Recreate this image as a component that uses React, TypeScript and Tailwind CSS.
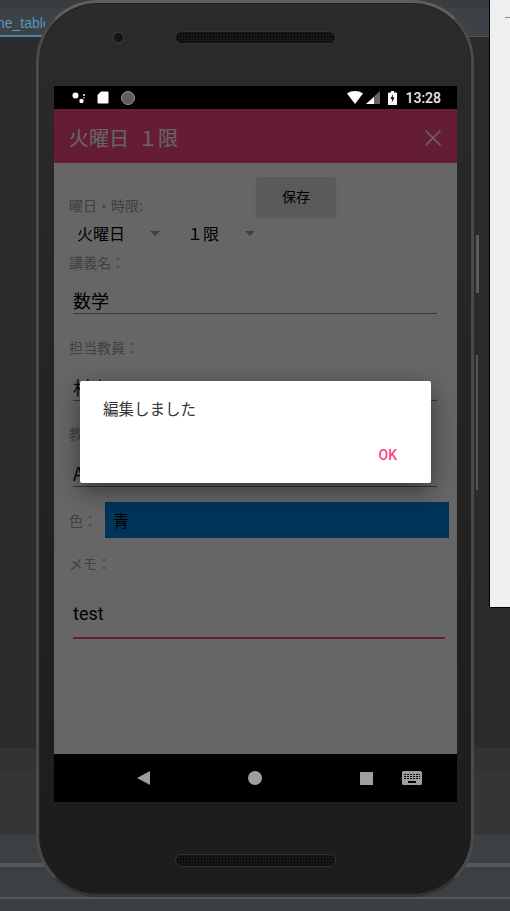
import { X } from "lucide-react";

const cjk = "font-['Noto_Sans_CJK_JP','Noto_Sans',sans-serif]";

function Arrow() {
  return <div className="h-0 w-0 border-x-[5px] border-t-[5px] border-x-transparent border-t-[#a0a0a0]" />;
}

function Speaker() {
  return (
    <div className="mx-auto h-[13px] w-[161px] rounded-full border border-[#333] bg-[#151515] bg-[radial-gradient(#000_1px,transparent_1px)] bg-[length:3px_3px]" />
  );
}

function Field({ value, className }: { value: string; className: string }) {
  return (
    <div className={`ml-[19px] flex w-[364px] items-center border-b border-[#8a8a8a] text-[18px] leading-none text-black ${className}`}>
      {value}
    </div>
  );
}

function StatusBar() {
  return (
    <div className="flex h-[23px] shrink-0 items-center bg-black pl-[18px] pr-[16px]">
      <svg width="14" height="12" viewBox="0 0 14 12" className="mr-[11px]" fill="#fff">
        <circle cx="3.5" cy="3.5" r="3" />
        <circle cx="9.5" cy="9" r="2.2" />
        <circle cx="12" cy="3" r="1" />
        <circle cx="12" cy="5.8" r="0.7" />
      </svg>
      <svg width="12" height="13" viewBox="0 0 12 13" className="mr-[12px]" fill="#fff">
        <path d="M4 0.5h6.5a1 1 0 0 1 1 1v10a1 1 0 0 1-1 1h-9a1 1 0 0 1-1-1V4z" />
      </svg>
      <div className="h-[14px] w-[14px] rounded-full border border-[#999] bg-[#5e5e5e]" />
      <svg width="16" height="13" viewBox="0 0 17 13" preserveAspectRatio="none" className="ml-auto" fill="#fff">
        <path d="M0 2.5C2.5.8 5.4 0 8.5 0s6 .8 8.5 2.5L8.5 13z" />
      </svg>
      <svg width="14" height="13" viewBox="0 0 14 13" className="ml-[3px]">
        <path d="M14 0v13H0z" fill="#666" />
        <path d="M8 6v7H0z" fill="#fff" />
      </svg>
      <svg width="9" height="14" viewBox="0 0 9 14" className="ml-[8px]">
        <path d="M3 0h3v1.5h2.2a.8.8 0 0 1 .8.8v11a.8.8 0 0 1-.8.8H.8a.8.8 0 0 1-.8-.8v-11a.8.8 0 0 1 .8-.8H3z" fill="#fff" />
        <path d="M5 3 2.5 8h1.7L3.8 11.5 6.5 6.5H4.7z" fill="#000" />
      </svg>
      <span className="ml-[8px] font-['Roboto',sans-serif] text-[14px] font-medium leading-none text-[#e8e8e8]">13:28</span>
    </div>
  );
}

function NavBar() {
  return (
    <div className="flex h-[48px] shrink-0 items-center bg-black pl-[83px]">
      <svg width="13" height="14" viewBox="0 0 13 14" fill="#9e9e9e">
        <path d="M13 0v14L0 7z" />
      </svg>
      <div className="ml-[98px] h-[14px] w-[14px] rounded-full bg-[#9e9e9e]" />
      <div className="ml-[98px] h-[13px] w-[13px] bg-[#9e9e9e]" />
      <svg width="20" height="14" viewBox="0 0 20 14" className="ml-[29px]">
        <rect width="20" height="14" rx="1.5" fill="#9e9e9e" />
        <g fill="#000">
          <rect x="2" y="3" width="16" height="1" />
          <rect x="2" y="5" width="16" height="1" />
          <rect x="2" y="7" width="16" height="1" />
          <rect x="6" y="10" width="8" height="2" />
        </g>
        <g fill="#9e9e9e">
          <rect x="4" y="2" width="1" height="7" />
          <rect x="7" y="2" width="1" height="7" />
          <rect x="10" y="2" width="1" height="7" />
          <rect x="13" y="2" width="1" height="7" />
          <rect x="16" y="2" width="1" height="7" />
        </g>
      </svg>
    </div>
  );
}

function FormScreen() {
  return (
    <div className={`relative flex min-h-0 flex-1 flex-col ${cjk}`}>
      <div className="flex h-[54px] shrink-0 items-center justify-between bg-[#fd4a87] pl-[15px] pr-[10px] pt-[3px] text-[20px] leading-none text-white">
        <span className="whitespace-pre">火曜日  １限</span>
        <X size={28} strokeWidth={1.3} color="#fff" />
      </div>
      <div className="flex-1 bg-white text-[14px] leading-none text-[#a0a0a0]">
        <div className="flex h-[54px] items-end pl-[15px]">
          <span className="mb-[5px] w-[187px]">曜日・時限:</span>
          <button className="h-[40px] w-[80px] rounded-[2px] bg-[#e2e2e2] pb-[3px] text-[14px] text-black shadow-sm">保存</button>
        </div>
        <div className="flex h-[30px] items-center pl-[23px] pt-[2px] text-[16px] text-black">
          <span className="w-[73px]">火曜日</span>
          <Arrow />
          <span className="ml-[27px] w-[58px]">１限</span>
          <Arrow />
        </div>
        <div className="pl-[15px] pt-[8px]">講義名：</div>
        <Field value="数学" className="mt-[15px] h-[30px] pt-[3px]" />
        <div className="pl-[15px] pt-[26px]">担当教員：</div>
        <Field value="村山" className="mt-[14px] h-[33px] pt-[6px]" />
        <div className="pl-[15px] pt-[25px]">教室名：</div>
        <Field value="A101" className="mt-[14px] h-[33px] pt-[6px]" />
        <div className="mt-[15px] flex h-[36px] items-center pl-[15px]">
          <span className="w-[36px]">色：</span>
          <div className="flex h-full w-[344px] items-center bg-[#0083df] pl-[8px] text-[16px] text-black">青</div>
        </div>
        <div className="pl-[15px] pt-[18px]">メモ：</div>
        <div className="ml-[19px] mt-[22px] flex h-[47px] w-[372px] items-center border-b-2 border-[#fd4a87] pb-[2px] font-['Roboto',sans-serif] text-[18px] leading-none text-black">
          test
        </div>
      </div>
      {/* scrim */}
      <div className="absolute inset-0 bg-black/60" />
      {/* alert dialog */}
      <div className="absolute left-[26px] top-[272px] h-[102px] w-[351px] rounded-[2px] bg-white shadow-[0_8px_24px_rgba(0,0,0,0.45)]">
        <div className="pl-[23px] pt-[17px] text-[15.5px] leading-[20px] text-[#333]">編集しました</div>
        <div className="mt-[30px] pr-[34px] text-right font-['Roboto',sans-serif] text-[14px] font-medium leading-none text-[#ff4081]">OK</div>
      </div>
    </div>
  );
}

export default function App() {
  return (
    <div className="relative h-[911px] w-[510px] overflow-hidden bg-[#2b2b2b]">
      {/* IDE behind the emulator */}
      <div className="flex h-full flex-col">
        <div className="h-[8px] bg-[#3a3d3f]" />
        <div className="h-[29px] border-b border-[#55595b] bg-[#3c4245] font-['Liberation_Sans',sans-serif] text-[14px] leading-[30px] text-[#5a95c0]">
          <span className="-ml-[3px] block h-[29px] w-[48px] overflow-hidden whitespace-nowrap border-b-2 border-[#4a88a8]">ne_table</span>
        </div>
        <div className="h-[711px] bg-[#2b2b2b]" />
        <div className="h-[22px] bg-[#303234]" />
        <div className="h-[65px] bg-[#333537]" />
        <div className="h-[28px] bg-[#3c4043]" />
        <div className="h-[34px] border-t-4 border-[#53585a] bg-[#3c4043]" />
        <div className="flex-1 border-t-2 border-[#54585a] bg-[#3b3f42]" />
      </div>

      {/* right-hand window */}
      <div className="absolute left-[489px] top-0 h-[608px] w-[21px] border-b border-l border-black bg-[#f0f0f0] pl-[15px] pt-[17px]">
        <div className="h-px w-[6px] bg-[#6a8ca8]" />
      </div>
      <div className="absolute left-[476px] top-[235px] h-[58px] w-[3px] bg-[#5a5a5a]" />
      <div className="absolute left-[476px] top-[355px] h-[135px] w-[2px] bg-[#555]" />

      {/* emulator frame */}
      <div className="absolute left-[36px] top-0 flex h-[897px] w-[438px] flex-col rounded-[62px] border-[3px] border-[#4a4a4a] border-t-[#5e5e5e] border-b-[#333] bg-gradient-to-b from-[#2b2b2b] to-[#1c1c1c] pl-[15px] pr-[14px] shadow-[inset_0_0_0_1px_#222]">
        <div className="relative h-[83px] shrink-0 pt-[28px]">
          <Speaker />
          <div className="absolute left-[58px] top-[28px] h-[13px] w-[13px] rounded-full border-[2px] border-[#333] bg-[#141418]" />
        </div>
        <div className="flex h-[716px] shrink-0 flex-col">
          <StatusBar />
          <FormScreen />
          <NavBar />
        </div>
        <div className="mt-[52px]">
          <Speaker />
        </div>
      </div>
    </div>
  );
}
